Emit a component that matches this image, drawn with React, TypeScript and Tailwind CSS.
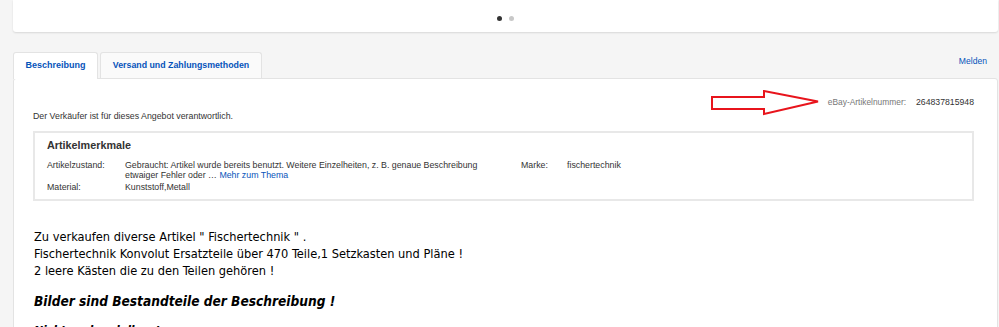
export default function App() {
  return (
    <div className="h-[327px] overflow-hidden bg-[#f5f5f5] pl-[13px] pr-px font-['Liberation_Sans',Arial,sans-serif]">
      {/* image carousel footer */}
      <div className="h-[32px] bg-white rounded-b-[3px] shadow-[0_1px_2px_rgba(0,0,0,0.12)] flex items-end justify-center pb-[11px] gap-[7px]">
        <span className="w-[5px] h-[5px] rounded-full bg-[#333]" />
        <span className="w-[5px] h-[5px] rounded-full bg-[#c8c8c8]" />
      </div>

      {/* tabs */}
      <div className="mt-[20px] flex items-end justify-between">
        <div className="flex gap-[2px]">
          <div className="h-[27px] w-[85px] bg-white border border-[#e3e3e3] border-b-0 rounded-t-[3px] flex items-center justify-center text-[9px] font-bold text-[#0654ba] -mb-px relative z-10">
            Beschreibung
          </div>
          <div className="h-[26px] w-[162px] bg-[#fafafa] border border-[#e3e3e3] border-b-0 rounded-t-[3px] flex items-center justify-center text-[8.8px] font-bold text-[#0654ba]">
            Versand und Zahlungsmethoden
          </div>
        </div>
        <a className="text-[8.6px] text-[#0654ba] mb-[10px] mr-[11px]">Melden</a>
      </div>

      {/* content panel */}
      <div className="relative bg-white border border-[#e3e3e3] rounded-[3px] pl-[19px] pr-[23px] pt-[17px] h-[260px]">
        <svg
          width="110"
          height="26"
          viewBox="0 0 110 26"
          className="absolute left-[697px] top-[11px]"
        >
          <path
            d="M1 7 L53 7 L53 1 L107 11.5 L53 24 L53 19 L1 19 Z"
            fill="none"
            stroke="#e8141c"
            strokeWidth="2"
          />
        </svg>
        <div className="flex justify-end items-center gap-[10px] leading-[12px]">
          <span className="text-[8.4px] text-[#777]">eBay-Artikelnummer:</span>
          <span className="text-[8.7px] text-[#333]">264837815948</span>
        </div>
        <p className="mt-[2px] text-[8.8px] leading-[12px] text-[#333]">Der Verkäufer ist für dieses Angebot verantwortlich.</p>

        <div className="mt-[9px] border-2 border-[#e8e8e8] pl-[12px] pt-[6px] pb-[7px]">
          <h3 className="text-[10.8px] leading-[13px] font-bold text-[#333]">Artikelmerkmale</h3>
          <div className="mt-[8px] grid grid-cols-[78px_396px_46px_1fr] gap-y-[2px] text-[8.8px] leading-[10px] text-[#333]">
            <span>Artikelzustand:</span>
            <span className="pr-[36px]">
              Gebraucht: Artikel wurde bereits benutzt. Weitere Einzelheiten, z. B. genaue Beschreibung etwaiger Fehler oder … <a className="text-[#0654ba]">Mehr zum Thema</a>
            </span>
            <span>Marke:</span>
            <span>fischertechnik</span>
            <span>Material:</span>
            <span>Kunststoff,Metall</span>
          </div>
        </div>

        <div className="mt-[27px] pl-px font-['Comic_Sans_MS','DejaVu_Sans_Condensed','DejaVu_Sans',sans-serif] text-black">
          <p className="text-[12.7px] leading-[17px]">
            Zu verkaufen diverse Artikel " Fischertechnik " .
            <br />
            Fischertechnik Konvolut Ersatzteile über 470 Teile,1 Setzkasten und Pläne !
            <br />
            2 leere Kästen die zu den Teilen gehören !
          </p>
          <p className="mt-[12px] text-[13.6px] font-bold italic leading-[20px]">Bilder sind Bestandteile der Beschreibung !</p>
          <p className="mt-[12px] text-[12px] font-bold italic leading-[17px]">Nicht verhandelbar !</p>
        </div>
      </div>
    </div>
  );
}
